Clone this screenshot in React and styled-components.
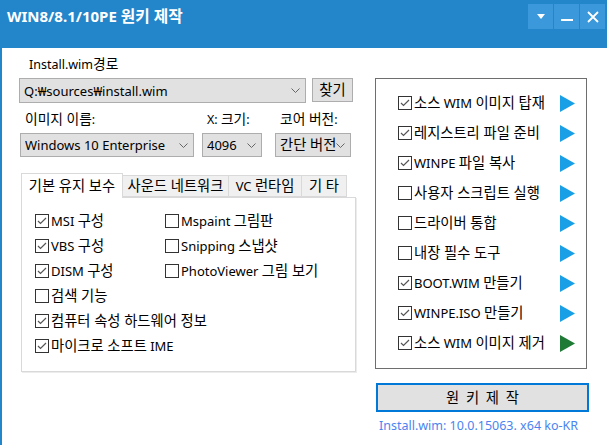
import React from 'react';
import styled, { createGlobalStyle } from 'styled-components';

const GlobalStyle = createGlobalStyle`
  html, body {
    margin: 0;
    padding: 0;
    background: #ffffff;
  }
  body {
    font-family: "Noto Sans", "Noto Sans CJK KR", sans-serif;
    font-size: 13px;
    color: #000;
  }
`;

const Window = styled.div`
  width: 607px;
  height: 445px;
  box-sizing: border-box;
  border-left: 2px solid #2386ca;
  background: #fff;
  overflow: hidden;
`;

const TitleBar = styled.div`
  height: 48px;
  box-sizing: border-box;
  margin-left: -2px;
  padding: 4px 2px 0 7px;
  background: #2386ca;
  display: flex;
  align-items: flex-start;
`;

const Title = styled.div`
  flex: 1;
  color: #fff;
  font-weight: 700;
  font-size: 15px;
  line-height: 25px;
`;

const TitleButtons = styled.div`
  display: flex;
  gap: 1px;
`;

const TitleButton = styled.div`
  width: 25px;
  height: 25px;
  background: #3a98db;
  display: flex;
  align-items: center;
  justify-content: center;
`;

// Hangul runs are drawn a little larger, as Malgun Gothic is wider than Noto CJK
const Hangul = styled.span`
  font-size: ${p => p.$scale || 1.1}em;
  line-height: 1;
`;

const Ko = ({ children, scale }) => (
  <span>
    {String(children)
      .split(/([\uAC00-\uD7A3]+(?:\s+[\uAC00-\uD7A3]+)*)/)
      .map((part, i) =>
        /[\uAC00-\uD7A3]/.test(part) ? (
          <Hangul key={i} $scale={scale}>
            {part}
          </Hangul>
        ) : (
          part
        ),
      )}
  </span>
);

const Body = styled.div`
  display: flex;
  padding-left: 17px;
`;

const LeftColumn = styled.div`
  width: 337px;
  display: flex;
  flex-direction: column;
`;

const PathLabel = styled.div`
  margin-top: 8px;
  padding-left: 10px;
  height: 18px;
  line-height: 18px;
  font-size: 12.5px;
`;

const PathRow = styled.div`
  margin-top: 4px;
  display: flex;
  align-items: flex-start;
  gap: 6px;
`;

const Combo = styled.div`
  width: ${p => p.$w}px;
  height: ${p => p.$h || 24}px;
  box-sizing: border-box;
  border: 1px solid #adadad;
  background: #e1e1e1;
  display: flex;
  align-items: center;
  padding: 0 5px 0 4px;
  font-size: 13px;
  white-space: nowrap;
`;

const ComboText = styled.span`
  flex: 1;
  overflow: hidden;
`;

const PushButton = styled.div`
  width: 41px;
  height: 24px;
  box-sizing: border-box;
  border: 1px solid #adadad;
  background: #e1e1e1;
  display: flex;
  align-items: center;
  justify-content: center;
  font-size: 13px;
`;

const FieldRow = styled.div`
  margin-top: 8px;
  display: flex;
  padding-left: 1px;
`;

const Field = styled.div`
  display: flex;
  flex-direction: column;
  margin-right: ${p => p.$mr || 0}px;
`;

const FieldLabel = styled.div`
  height: 18px;
  line-height: 18px;
  padding-left: 5px;
  margin-bottom: 4px;
  font-size: 12.5px;
  white-space: nowrap;
`;

const Tabs = styled.div`
  margin-top: 16px;
  margin-left: 2px;
  width: 335px;
`;

const TabStrip = styled.div`
  display: flex;
  align-items: flex-end;
  height: 24px;
  position: relative;
  z-index: 1;
`;

const Tab = styled.div`
  width: ${p => p.$w}px;
  height: ${p => (p.$active ? 25 : 22)}px;
  box-sizing: border-box;
  border: 1px solid #d9d9d9;
  border-bottom: ${p => (p.$active ? 'none' : '1px solid #d9d9d9')};
  border-left: ${p => (p.$first ? '1px solid #d9d9d9' : 'none')};
  background: ${p => (p.$active ? '#fff' : '#f0f0f0')};
  margin-bottom: ${p => (p.$active ? -1 : 0)}px;
  display: flex;
  align-items: center;
  justify-content: center;
  font-size: 13px;
  white-space: nowrap;
`;

const TabPanel = styled.div`
  height: 175px;
  box-sizing: border-box;
  border: 1px solid #d9d9d9;
  box-shadow: 1px 1px 0 #ececec;
  padding: 10px 0 0 13px;
  display: grid;
  grid-template-columns: 130px auto;
  grid-auto-rows: 25px;
`;

const Check = styled.label`
  display: flex;
  align-items: center;
  gap: 2px;
  font-size: 13px;
  white-space: nowrap;
  grid-column: ${p => (p.$wide ? '1 / span 2' : 'auto')};
`;

const RightColumn = styled.div`
  margin-left: 19px;
  width: 214px;
  display: flex;
  flex-direction: column;
`;

const StepBox = styled.div`
  margin-top: 30px;
  width: 212px;
  height: 291px;
  box-sizing: border-box;
  border: 1px solid #6e6e6e;
  padding: 9px 11px 0 22px;
  display: flex;
  flex-direction: column;
`;

const StepRow = styled.div`
  height: 30px;
  display: flex;
  align-items: center;
`;

const StepLabel = styled.div`
  flex: 1;
  display: flex;
  align-items: center;
  gap: 2px;
  font-size: 13px;
  white-space: nowrap;
`;

const MakeButton = styled.div`
  margin-top: 14px;
  margin-left: 1px;
  width: 213px;
  height: 29px;
  box-sizing: border-box;
  border: 2px solid #0078d7;
  background: #e1e1e1;
  display: flex;
  align-items: center;
  justify-content: center;
  font-size: 13px;
  word-spacing: 3px;
`;

const Status = styled.div`
  margin-top: 5px;
  padding-left: 4px;
  font-size: 12.5px;
  color: #4a84f0;
  white-space: nowrap;
`;

const Chevron = () => (
  <svg width="9" height="5" viewBox="0 0 9 5" style={{ flex: 'none' }}>
    <polyline points="0.5,0.5 4.5,4.5 8.5,0.5" fill="none" stroke="#666" strokeWidth="1" />
  </svg>
);

const Box = ({ checked }) => (
  <svg width="14" height="14" viewBox="0 0 14 14" style={{ flex: 'none' }}>
    <rect x="0.5" y="0.5" width="13" height="13" fill="#fff" stroke="#333" />
    {checked && (
      <polyline points="3,7 5.5,9.5 11,4" fill="none" stroke="#555" strokeWidth="1.2" />
    )}
  </svg>
);

const Arrow = ({ color }) => (
  <svg width="15" height="17" viewBox="0 0 15 17">
    <polygon points="0,0 15,8.5 0,17" fill={color} />
  </svg>
);

const optionItems = [
  { text: 'MSI 구성', on: true },
  { text: 'Mspaint 그림판', on: false },
  { text: 'VBS 구성', on: true },
  { text: 'Snipping 스냅샷', on: false },
  { text: 'DISM 구성', on: true },
  { text: 'PhotoViewer 그림 보기', on: false },
  { text: '검색 기능', on: false, wide: true },
  { text: '컴퓨터 속성 하드웨어 정보', on: true, wide: true },
  { text: '마이크로 소프트 IME', on: true, wide: true },
];

const steps = [
  { text: '소스 WIM 이미지 탑재', on: true },
  { text: '레지스트리 파일 준비', on: true },
  { text: 'WINPE 파일 복사', on: true },
  { text: '사용자 스크립트 실행', on: false },
  { text: '드라이버 통합', on: false },
  { text: '내장 필수 도구', on: false },
  { text: 'BOOT.WIM 만들기', on: true },
  { text: 'WINPE.ISO 만들기', on: true },
  { text: '소스 WIM 이미지 제거', on: true, done: true },
];

const tabs = [
  { text: '기본 유지 보수', w: 102 },
  { text: '사운드 네트워크', w: 106 },
  { text: 'VC 런타임', w: 73 },
  { text: '기 타', w: 45 },
];

export default function App() {
  return (
    <Window>
      <GlobalStyle />
      <TitleBar>
        <Title>
          <Ko scale={1.05}>WIN8/8.1/10PE 원키 제작</Ko>
        </Title>
        <TitleButtons>
          <TitleButton>
            <svg width="8" height="5" viewBox="0 0 8 5">
              <polygon points="0,0 8,0 4,5" fill="#fff" />
            </svg>
          </TitleButton>
          <TitleButton>
            <svg width="12" height="8" viewBox="0 0 12 8">
              <rect x="0" y="6" width="12" height="2" fill="#fff" />
            </svg>
          </TitleButton>
          <TitleButton>
            <svg width="12" height="12" viewBox="0 0 12 12">
              <path d="M1 1 L11 11 M11 1 L1 11" stroke="#fff" strokeWidth="1.8" />
            </svg>
          </TitleButton>
        </TitleButtons>
      </TitleBar>
      <Body>
        <LeftColumn>
          <PathLabel>
            <Ko>Install.wim경로</Ko>
          </PathLabel>
          <PathRow>
            <Combo $w={287} $h={25}>
              <ComboText>Q:₩sources₩install.wim</ComboText>
              <Chevron />
            </Combo>
            <PushButton>
              <Ko>찾기</Ko>
            </PushButton>
          </PathRow>
          <FieldRow>
            <Field $mr={8}>
              <FieldLabel>
                <Ko>이미지 이름:</Ko>
              </FieldLabel>
              <Combo $w={174}>
                <ComboText>Windows 10 Enterprise</ComboText>
                <Chevron />
              </Combo>
            </Field>
            <Field $mr={13}>
              <FieldLabel>
                <Ko>X: 크기:</Ko>
              </FieldLabel>
              <Combo $w={60}>
                <ComboText>4096</ComboText>
                <Chevron />
              </Combo>
            </Field>
            <Field>
              <FieldLabel>
                <Ko>코어 버전:</Ko>
              </FieldLabel>
              <Combo $w={76}>
                <ComboText>
                  <Ko>간단 버전</Ko>
                </ComboText>
                <Chevron />
              </Combo>
            </Field>
          </FieldRow>
          <Tabs>
            <TabStrip>
              {tabs.map((t, i) => (
                <Tab key={t.text} $w={t.w} $active={i === 0} $first={i === 0}>
                  <Ko>{t.text}</Ko>
                </Tab>
              ))}
            </TabStrip>
            <TabPanel>
              {optionItems.map(o => (
                <Check key={o.text} $wide={o.wide}>
                  <Box checked={o.on} />
                  <Ko>{o.text}</Ko>
                </Check>
              ))}
            </TabPanel>
          </Tabs>
        </LeftColumn>
        <RightColumn>
          <StepBox>
            {steps.map(s => (
              <StepRow key={s.text}>
                <StepLabel>
                  <Box checked={s.on} />
                  <Ko>{s.text}</Ko>
                </StepLabel>
                <Arrow color={s.done ? '#1f7a36' : '#199fe6'} />
              </StepRow>
            ))}
          </StepBox>
          <MakeButton>
            <Ko>원 키 제 작</Ko>
          </MakeButton>
          <Status>Install.wim: 10.0.15063. x64 ko-KR</Status>
        </RightColumn>
      </Body>
    </Window>
  );
}
